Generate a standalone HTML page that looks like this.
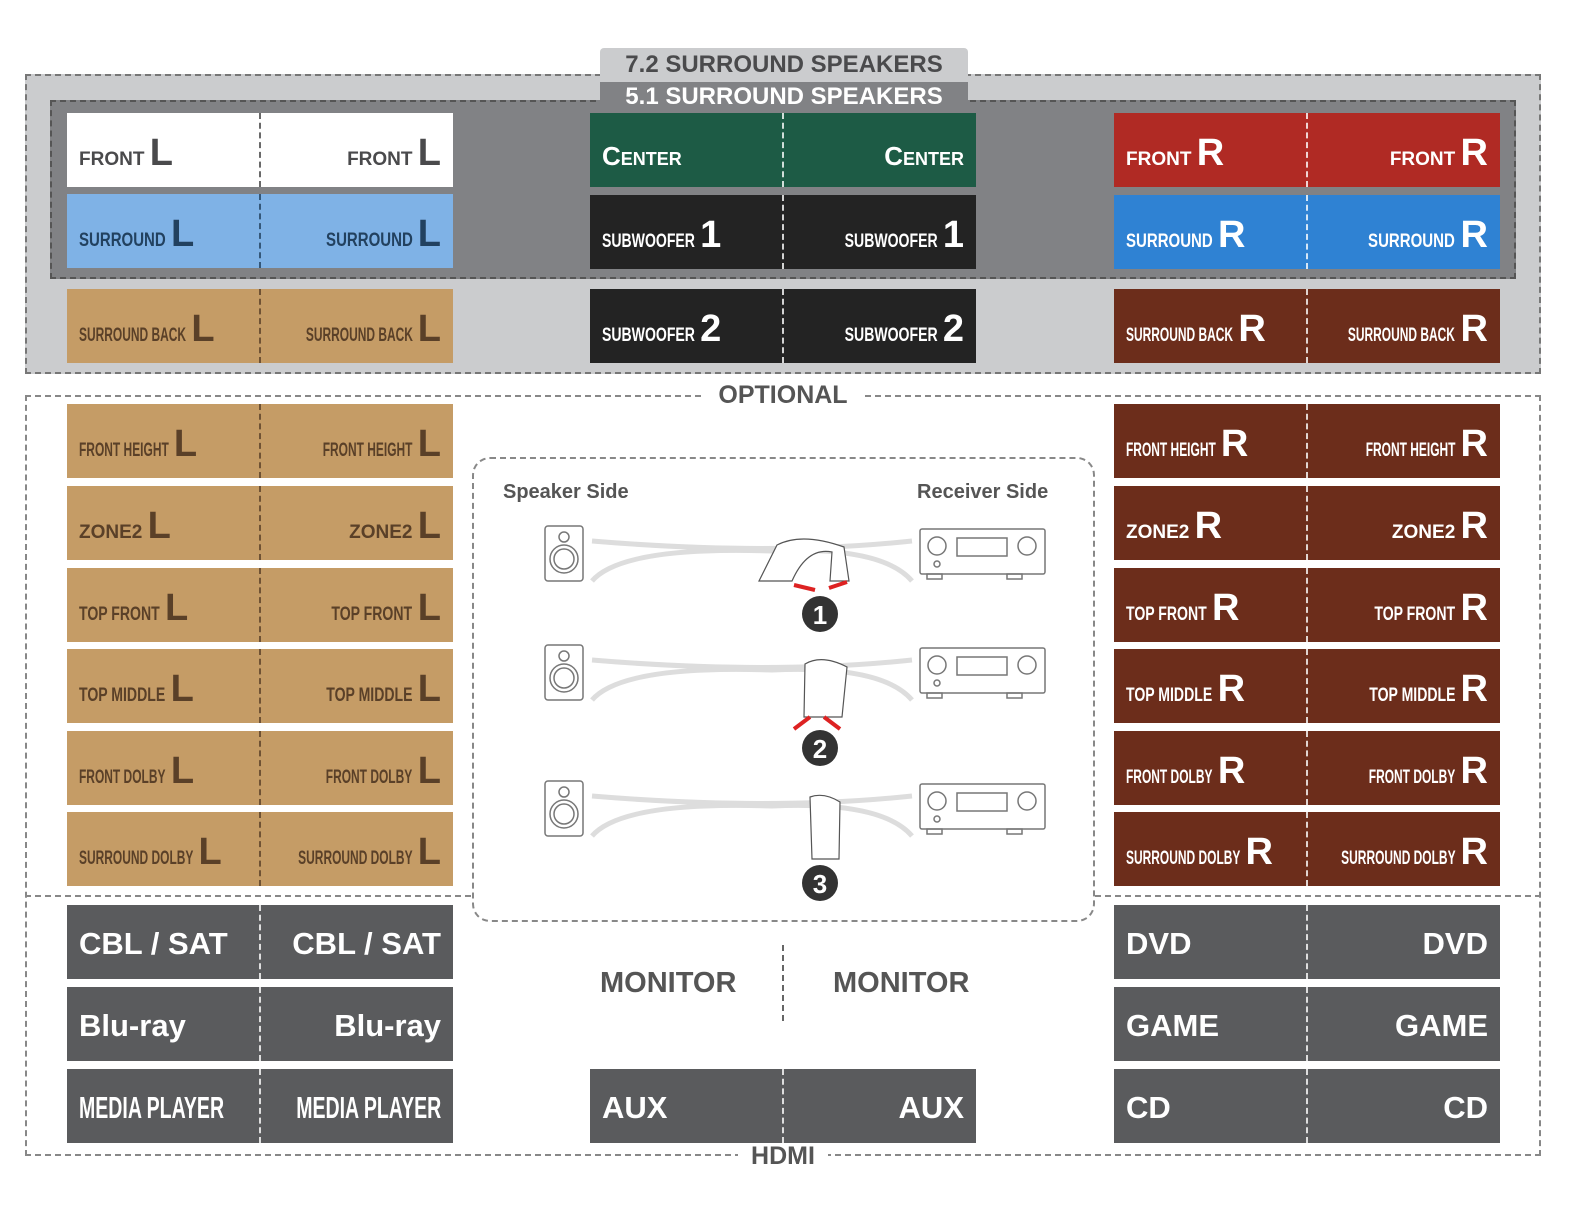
<!DOCTYPE html>
<html><head><meta charset="utf-8"><style>
*{margin:0;padding:0;box-sizing:border-box}
body{width:1584px;height:1224px;background:#fff;position:relative;overflow:hidden;font-family:"Liberation Sans",sans-serif;font-weight:bold}
.abs{position:absolute}
.lab{position:absolute;width:386px;height:74px;white-space:nowrap}
.lab::after{content:"";position:absolute;left:192px;top:0;bottom:0;border-left:2px dashed currentColor;opacity:.8}
.lab.w::after{border-color:#444}
.a,.b{position:absolute;bottom:18px;font-size:19px;line-height:1}
.a{left:12px}.b{right:12px}
.a i,.b i{font-style:normal;display:inline-block;transform:scaleX(.74)}
.a i.n,.b i.n{transform:scaleX(.63)}
.a i.m,.b i.m{transform:scaleX(.79)}
.a i{transform-origin:left bottom}.b i{transform-origin:right bottom}
.lab b{font-size:38px;line-height:.8;vertical-align:baseline}
.big .a,.big .b{font-size:31px;bottom:20px}
.ctr .a,.ctr .b{font-size:26px;font-variant:small-caps}
.bl{background:#7fb2e6;color:#22415f}
.tan{background:#c59c66;color:#5a4028}
.red{background:#b02a24;color:#fff}
.blu{background:#2f82d3;color:#fff}
.brn{background:#6c2d1b;color:#fff}
.grn{background:#1d5b45;color:#fff}
.blk{background:#232323;color:#fff}
.gry{background:#5a5b5d;color:#fff}
.wh{background:#fff;color:#4a4a4c}
</style></head><body>
<div class="abs" style="left:25px;top:74px;width:1516px;height:300px;background:#cbccce;border:2px dashed #777"></div>
<div class="abs" style="left:600px;top:48px;width:368px;height:34px;background:#cbccce;border-radius:4px 4px 0 0;color:#4a4a4c;font-size:24px;text-align:center;line-height:34px">7.2 SURROUND SPEAKERS</div>
<div class="abs" style="left:50px;top:100px;width:1466px;height:179px;background:#818285;border:2px dashed #555"></div>
<div class="abs" style="left:600px;top:82px;width:368px;height:30px;background:#818285;color:#fff;font-size:24px;text-align:center;line-height:30px">5.1 SURROUND SPEAKERS</div>

<div class="lab wh w" style="left:67px;top:113px"><span class="a">FRONT <b>L</b></span><span class="b">FRONT <b>L</b></span></div>
<div class="lab bl" style="left:67px;top:194px"><span class="a"><i class="m">SURROUND</i> <b>L</b></span><span class="b"><i class="m">SURROUND</i> <b>L</b></span></div>
<div class="lab tan" style="left:67px;top:289px"><span class="a"><i class="n">SURROUND BACK</i> <b>L</b></span><span class="b"><i class="n">SURROUND BACK</i> <b>L</b></span></div>

<div class="lab grn ctr" style="left:590px;top:113px"><span class="a">Center</span><span class="b">Center</span></div>
<div class="lab blk" style="left:590px;top:195px"><span class="a"><i>SUBWOOFER</i> <b>1</b></span><span class="b"><i>SUBWOOFER</i> <b>1</b></span></div>
<div class="lab blk" style="left:590px;top:289px"><span class="a"><i>SUBWOOFER</i> <b>2</b></span><span class="b"><i>SUBWOOFER</i> <b>2</b></span></div>

<div class="lab red" style="left:1114px;top:113px"><span class="a">FRONT <b>R</b></span><span class="b">FRONT <b>R</b></span></div>
<div class="lab blu" style="left:1114px;top:195px"><span class="a"><i class="m">SURROUND</i> <b>R</b></span><span class="b"><i class="m">SURROUND</i> <b>R</b></span></div>
<div class="lab brn" style="left:1114px;top:289px"><span class="a"><i class="n">SURROUND BACK</i> <b>R</b></span><span class="b"><i class="n">SURROUND BACK</i> <b>R</b></span></div>

<div class="abs" style="left:25px;top:395px;width:1516px;height:761px;border:2px dashed #888"></div>
<div class="abs" style="left:25px;top:895px;width:446px;border-top:2px dashed #888"></div>
<div class="abs" style="left:1095px;top:895px;width:446px;border-top:2px dashed #888"></div>
<div class="abs" style="left:705px;top:381px;width:156px;background:#fff;text-align:center;font-size:25px;color:#555">OPTIONAL</div>
<div class="abs" style="left:738px;top:1142px;width:90px;background:#fff;text-align:center;font-size:25px;color:#555">HDMI</div>

<div class="lab tan" style="left:67px;top:404px"><span class="a"><i class="n">FRONT HEIGHT</i> <b>L</b></span><span class="b"><i class="n">FRONT HEIGHT</i> <b>L</b></span></div>
<div class="lab tan" style="left:67px;top:486px"><span class="a">ZONE2 <b>L</b></span><span class="b">ZONE2 <b>L</b></span></div>
<div class="lab tan" style="left:67px;top:568px"><span class="a"><i>TOP FRONT</i> <b>L</b></span><span class="b"><i>TOP FRONT</i> <b>L</b></span></div>
<div class="lab tan" style="left:67px;top:649px"><span class="a"><i>TOP MIDDLE</i> <b>L</b></span><span class="b"><i>TOP MIDDLE</i> <b>L</b></span></div>
<div class="lab tan" style="left:67px;top:731px"><span class="a"><i class="n">FRONT DOLBY</i> <b>L</b></span><span class="b"><i class="n">FRONT DOLBY</i> <b>L</b></span></div>
<div class="lab tan" style="left:67px;top:812px"><span class="a"><i class="n">SURROUND DOLBY</i> <b>L</b></span><span class="b"><i class="n">SURROUND DOLBY</i> <b>L</b></span></div>

<div class="lab brn" style="left:1114px;top:404px"><span class="a"><i class="n">FRONT HEIGHT</i> <b>R</b></span><span class="b"><i class="n">FRONT HEIGHT</i> <b>R</b></span></div>
<div class="lab brn" style="left:1114px;top:486px"><span class="a">ZONE2 <b>R</b></span><span class="b">ZONE2 <b>R</b></span></div>
<div class="lab brn" style="left:1114px;top:568px"><span class="a"><i>TOP FRONT</i> <b>R</b></span><span class="b"><i>TOP FRONT</i> <b>R</b></span></div>
<div class="lab brn" style="left:1114px;top:649px"><span class="a"><i>TOP MIDDLE</i> <b>R</b></span><span class="b"><i>TOP MIDDLE</i> <b>R</b></span></div>
<div class="lab brn" style="left:1114px;top:731px"><span class="a"><i class="n">FRONT DOLBY</i> <b>R</b></span><span class="b"><i class="n">FRONT DOLBY</i> <b>R</b></span></div>
<div class="lab brn" style="left:1114px;top:812px"><span class="a"><i class="n">SURROUND DOLBY</i> <b>R</b></span><span class="b"><i class="n">SURROUND DOLBY</i> <b>R</b></span></div>

<div class="abs" style="left:472px;top:457px;width:623px;height:465px;border:2px dashed #888;border-radius:18px"></div>
<div class="abs" style="left:503px;top:481px;font-size:20px;color:#555">Speaker Side</div>
<div class="abs" style="left:917px;top:481px;font-size:20px;color:#555">Receiver Side</div>
<svg class="abs" style="left:472px;top:457px" width="623" height="465" viewBox="0 0 623 465">
<defs>
<g id="row" fill="none" stroke="#777" stroke-width="1.5">
<rect x="73" y="0" width="38" height="55" rx="3"/>
<circle cx="92" cy="11" r="5"/><circle cx="92" cy="33" r="14"/><circle cx="92" cy="33" r="10"/>
<path d="M120 15 Q300 30 440 15" stroke="#ddd" stroke-width="5"/>
<path d="M120 55 Q150 20 300 25 Q410 20 440 55" stroke="#ddd" stroke-width="5"/>
<rect x="448" y="3" width="125" height="45" rx="2"/>
<rect x="485" y="12" width="50" height="18"/>
<circle cx="465" cy="20" r="9"/><circle cx="555" cy="20" r="9"/><circle cx="465" cy="38" r="3"/>
<rect x="455" y="48" width="15" height="5"/><rect x="535" y="48" width="15" height="5"/>
</g>
</defs>
<use href="#row" x="0" y="69"/>
<use href="#row" x="0" y="188"/>
<use href="#row" x="0" y="324"/>
<path d="M287 124 L305 88 Q330 75 372 90 L377 124 L358 124 L360 95 Q335 90 320 124 Z" fill="#fff" stroke="#555" stroke-width="1.2"/>
<path d="M322 128 L343 133 M375 125 L357 131" stroke="#d22" stroke-width="4"/>
<path d="M333 207 Q350 197 375 210 L370 260 L332 260 Z" fill="#fff" stroke="#555" stroke-width="1.2"/>
<path d="M322 272 L338 260 M368 272 L352 260" stroke="#d22" stroke-width="4"/>
<path d="M338 340 Q352 335 368 345 L367 402 L340 402 Z" fill="#fff" stroke="#555" stroke-width="1.2"/>
<circle cx="348" cy="157" r="18" fill="#333"/><text x="348" y="167" fill="#fff" font-size="26" text-anchor="middle" font-family="Liberation Sans">1</text>
<circle cx="348" cy="291" r="18" fill="#333"/><text x="348" y="301" fill="#fff" font-size="26" text-anchor="middle" font-family="Liberation Sans">2</text>
<circle cx="348" cy="426" r="18" fill="#333"/><text x="348" y="436" fill="#fff" font-size="26" text-anchor="middle" font-family="Liberation Sans">3</text>
</svg>

<div class="lab gry big" style="left:67px;top:905px"><span class="a">CBL / SAT</span><span class="b">CBL / SAT</span></div>
<div class="lab gry big" style="left:67px;top:987px"><span class="a">Blu-ray</span><span class="b">Blu-ray</span></div>
<div class="lab gry big" style="left:67px;top:1069px"><span class="a"><i class="n">MEDIA PLAYER</i></span><span class="b"><i class="n">MEDIA PLAYER</i></span></div>
<div class="lab gry big" style="left:1114px;top:905px"><span class="a">DVD</span><span class="b">DVD</span></div>
<div class="lab gry big" style="left:1114px;top:987px"><span class="a">GAME</span><span class="b">GAME</span></div>
<div class="lab gry big" style="left:1114px;top:1069px"><span class="a">CD</span><span class="b">CD</span></div>
<div class="lab gry big" style="left:590px;top:1069px"><span class="a">AUX</span><span class="b">AUX</span></div>
<div class="abs" style="left:600px;top:967px;font-size:29px;color:#555">MONITOR</div>
<div class="abs" style="left:833px;top:967px;font-size:29px;color:#555">MONITOR</div>
<div class="abs" style="left:782px;top:945px;height:76px;border-left:2px dashed #666"></div>
<script>
function f(e){return e.classList.contains('n')?0.37:e.classList.contains('m')?0.21:0.26;}
document.querySelectorAll('.a i').forEach(function(e){e.style.marginRight=(-e.offsetWidth*f(e))+'px';});
document.querySelectorAll('.b i').forEach(function(e){e.style.marginLeft=(-e.offsetWidth*f(e))+'px';});
</script>
</body></html>
